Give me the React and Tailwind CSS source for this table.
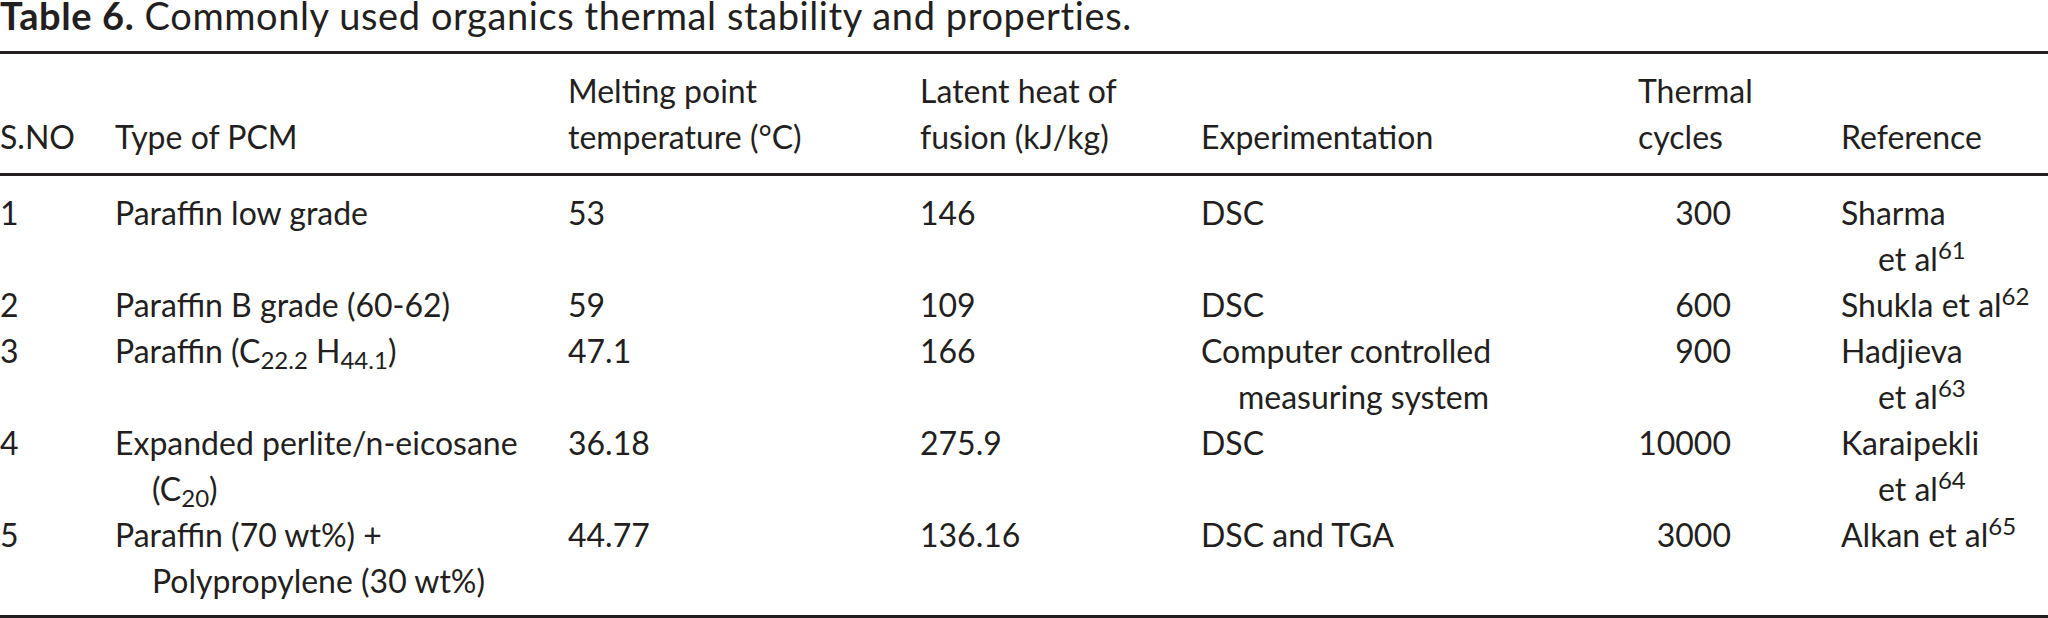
const rows = [
  {
    no: "1",
    type: [<>Paraffin low grade</>],
    melt: "53",
    heat: "146",
    exp: ["DSC"],
    cycles: "300",
    ref: ["Sharma", <>et al<sup>61</sup></>],
  },
  {
    no: "2",
    type: [<>Paraffin B grade (60-62)</>],
    melt: "59",
    heat: "109",
    exp: ["DSC"],
    cycles: "600",
    ref: [<>Shukla et al<sup>62</sup></>],
  },
  {
    no: "3",
    type: [
      <>
        Paraffin (C<sub>22.2</sub> H<sub>44.1</sub>)
      </>,
    ],
    melt: "47.1",
    heat: "166",
    exp: ["Computer controlled", "measuring system"],
    cycles: "900",
    ref: ["Hadjieva", <>et al<sup>63</sup></>],
  },
  {
    no: "4",
    type: [
      <>Expanded perlite/n-eicosane</>,
      <>
        (C<sub>20</sub>)
      </>,
    ],
    melt: "36.18",
    heat: "275.9",
    exp: ["DSC"],
    cycles: "10000",
    ref: ["Karaipekli", <>et al<sup>64</sup></>],
  },
  {
    no: "5",
    type: [<>Paraffin (70 wt%) +</>, <>Polypropylene (30 wt%)</>],
    melt: "44.77",
    heat: "136.16",
    exp: ["DSC and TGA"],
    cycles: "3000",
    ref: [<>Alkan et al<sup>65</sup></>],
  },
];

const cols = "grid grid-cols-[115px_453px_352px_281px_437px_203px_1fr]";

// first line flush, following lines hang in by ~36px
const Lines = ({ items }) => (
  <div>
    {items.map((item, i) => (
      <div key={i} className={i > 0 ? "pl-[37px] whitespace-nowrap" : "whitespace-nowrap"}>
        {item}
      </div>
    ))}
  </div>
);

export default function App() {
  return (
    <div className="w-[2048px] h-[618px] bg-white text-[#231f20] font-['Lato','Liberation_Sans',sans-serif] text-[32px] leading-[46px] overflow-hidden">
      <div className="text-[38px] leading-[30px] tracking-[0.6px] whitespace-nowrap">
        <span className="font-bold">Table 6.</span> Commonly used organics thermal stability and properties.
      </div>

      <div className="mt-[21px] h-[3px] bg-[#231f20]" />

      {/* header */}
      <div className={`${cols} items-end pt-[14px] pb-[13px]`}>
        <div>S.NO</div>
        <div>Type of PCM</div>
        <div>
          Melting point
          <br />
          temperature (°C)
        </div>
        <div>
          Latent heat of
          <br />
          fusion (kJ/kg)
        </div>
        <div>Experimentation</div>
        <div>
          Thermal
          <br />
          cycles
        </div>
        <div>Reference</div>
      </div>

      <div className="h-[3px] bg-[#231f20]" />

      {/* body */}
      <div className="pt-[14px] pb-[11px]">
        {rows.map((r) => (
          <div key={r.no} className={`${cols} items-start`}>
            <div>{r.no}</div>
            <Lines items={r.type} />
            <div>{r.melt}</div>
            <div>{r.heat}</div>
            <Lines items={r.exp} />
            <div className="w-[93px] text-right">{r.cycles}</div>
            <Lines items={r.ref} />
          </div>
        ))}
      </div>

      <div className="h-[3px] bg-[#231f20]" />
    </div>
  );
}
